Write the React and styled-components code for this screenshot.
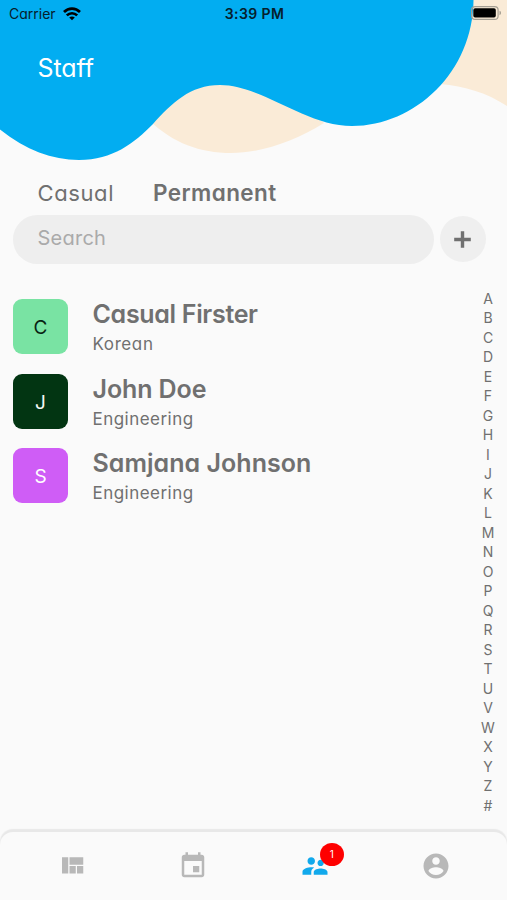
import React, { Component } from 'react';
import styled, { createGlobalStyle } from 'styled-components';

const GlobalStyle = createGlobalStyle`
  * {
    box-sizing: border-box;
  }
  body {
    margin: 0;
    background: #fafafa;
    color: #707070;
    font-family: Inter, "Open Sans", sans-serif;
    font-feature-settings: "cv11";
  }
`;

const Screen = styled.div`
  display: flex;
  flex-direction: column;
  width: 507px;
  height: 900px;
  overflow: hidden;
`;

const Header = styled.header`
  display: grid;
  height: 170px;
  > * {
    grid-area: 1 / 1;
  }
`;

const HeaderContent = styled.div`
  z-index: 1;
`;

const StatusBar = styled.div`
  display: grid;
  grid-template-columns: 1fr auto 1fr;
  align-items: center;
  height: 27px;
  padding: 0 7px 0 9px;
  color: #06202c;
  font-size: 14px;
`;

const Carrier = styled.span`
  display: flex;
  align-items: center;
  gap: 7px;
`;

const Time = styled.span`
  font-weight: 600;
  letter-spacing: 0.4px;
`;

const BatteryIcon = styled.svg`
  justify-self: end;
  margin: -2px -3px 0 0;
`;

const Title = styled.h1`
  margin: 26px 0 0 37.5px;
  color: #fff;
  font-size: 25px;
  font-weight: 400;
  line-height: 30px;
  letter-spacing: -0.1px;
`;

const Tabs = styled.div`
  display: flex;
  gap: 39px;
  height: 45px;
  padding: 9px 0 0 37.5px;
`;

const Tab = styled.span`
  font-size: ${props => props.$active ? 22.5 : 22}px;
  font-weight: ${props => props.$active ? 600 : 400};
  line-height: 28px;
  letter-spacing: ${props => props.$active ? '0.4px' : '0.6px'};
`;

const SearchRow = styled.div`
  display: flex;
  align-items: center;
  gap: 6px;
  padding-left: 13px;
`;

const SearchField = styled.div`
  width: 421px;
  height: 49px;
  padding: 0 24.5px;
  border-radius: 25px;
  background: #eee;
  color: #aaa;
  font-size: 20px;
  line-height: 47px;
  letter-spacing: 0.25px;
`;

const AddButton = styled.button`
  display: flex;
  align-items: center;
  justify-content: center;
  width: 46px;
  height: 46px;
  margin-top: -1px;
  padding: 0 1px 0 0;
  border: 0;
  border-radius: 50%;
  background: #efefef;
`;

const Content = styled.main`
  display: flex;
  flex: 1;
  justify-content: space-between;
`;

const StaffList = styled.div`
  display: flex;
  flex-direction: column;
  gap: 19.5px;
  padding: 35px 0 0 13px;
`;

const StaffRow = styled.div`
  display: flex;
  gap: 24.5px;
  height: 55px;
`;

const Avatar = styled.div`
  width: 55px;
  height: 55px;
  border-radius: 9px;
  background: ${props => props.$bg};
  color: ${props => props.color};
  font-size: 19px;
  line-height: 57px;
  text-align: center;
`;

const StaffName = styled.div`
  font-size: 25px;
  font-weight: 600;
  line-height: 30px;
  letter-spacing: ${props => props.$spacing}px;
  white-space: nowrap;
`;

const StaffRole = styled.div`
  margin-top: 4px;
  font-size: 17px;
  line-height: 23px;
  letter-spacing: ${props => props.$spacing}px;
`;

const AlphabetIndex = styled.div`
  display: flex;
  flex-direction: column;
  width: 38px;
  padding-top: 24.5px;
  font-size: 14px;
  line-height: 19.52px;
  text-align: center;
`;

const TabBar = styled.nav`
  display: flex;
  height: 68px;
  padding: 0 10px 0 11px;
  border-radius: 13px 13px 0 0;
  background: #fafafa;
  box-shadow: 0 -3px 1px #e8e8e8;
`;

const TabItem = styled.a`
  display: flex;
  flex: 1;
  justify-content: center;
  padding-top: 18.7px;
  color: ${props => props.$active ? '#11a9ec' : '#b8b8b8'};
`;

const IconWrap = styled.span`
  position: relative;
  width: 30px;
  height: 30px;
`;

const Badge = styled.span`
  position: absolute;
  top: -7.5px;
  left: 20px;
  width: 24px;
  height: 23px;
  border-radius: 50%;
  background: #fe0000;
  color: #fff;
  font-size: 10px;
  line-height: 23px;
  text-align: center;
`;

const staff = [
  { name: 'Casual Firster', role: 'Korean', bg: '#79e3a3', color: '#082313', spacing: -0.32, roleSpacing: 0.6 },
  { name: 'John Doe', role: 'Engineering', bg: '#023512', color: '#f4f8f5', spacing: -0.1, roleSpacing: 0.47 },
  { name: 'Samjana Johnson', role: 'Engineering', bg: '#cf5df6', color: '#fff', spacing: 0.04, roleSpacing: 0.47 },
];

const tabIcons = [
  { id: 'board', path: 'M10 18h5v-6h-5v6zm-6 0h5V5H4v13zm12 0h5v-6h-5v6zM10 5v6h11V5H10z' },
  { id: 'calendar', path: 'M17 12h-5v5h5v-5zM16 1v2H8V1H6v2H5c-1.11 0-1.99.9-1.99 2L3 19c0 1.1.89 2 2 2h14c1.1 0 2-.9 2-2V5c0-1.1-.9-2-2-2h-1V1h-2zm3 18H5V8h14v11z' },
  { id: 'staff', active: true, badge: 1, path: 'M16.5 12c1.38 0 2.49-1.12 2.49-2.5S17.88 7 16.5 7C15.12 7 14 8.12 14 9.5s1.12 2.5 2.5 2.5zM9 11c1.66 0 2.99-1.34 2.99-3S10.66 5 9 5C7.34 5 6 6.34 6 8s1.34 3 3 3zm7.5 3c-1.83 0-5.5.92-5.5 2.75V19h11v-2.25c0-1.83-3.67-2.75-5.5-2.75zM9 13c-2.33 0-7 1.17-7 3.5V19h7v-2.25c0-.85.33-2.34 2.37-3.47C10.5 13.1 9.66 13 9 13z' },
  { id: 'account', path: 'M12 2C6.48 2 2 6.48 2 12s4.48 10 10 10 10-4.48 10-10S17.52 2 12 2zm0 3c1.66 0 3 1.34 3 3s-1.34 3-3 3-3-1.34-3-3 1.34-3 3-3zm0 14.2c-2.5 0-4.71-1.28-6-3.22.03-1.99 4-3.08 6-3.08 1.99 0 5.97 1.09 6 3.08-1.29 1.94-3.5 3.22-6 3.22z' },
];

const Waves = () => (
  <svg width="507" height="170" viewBox="0 0 507 170">
    <path fill="#faebd7" d="M150 121C173 143 200 153 231 153C262 153 295 141 324 123L280 80H180ZM440 84C465 86 487 93 507 106V0H460Z" />
    <path fill="#02adf1" d="M0 0V129.500C26 150 52 160 79 160C113 160 134 143 153 124C172 103 190 85 220 85C262 85 305 126 352 126C415 126 473 72 473.500 0Z" />
  </svg>
);

const Wifi = () => (
  <svg width="18" height="14" viewBox="0 0 18 14" fill="none" stroke="#000" strokeWidth="2.700">
    <path d="M1 5C5.500 .4 12.500 .4 17 5" />
    <path d="M3.800 8.400C6.800 5.500 11.200 5.500 14.200 8.400" />
    <path d="M6.200 10.500C7.800 9 10.200 9 11.800 10.500L9 13.300Z" fill="#000" stroke="none" />
  </svg>
);

class App extends Component {
  render() {
    return (
      <Screen>
        <GlobalStyle />
        <Header>
          <Waves />
          <HeaderContent>
            <StatusBar>
              <Carrier>Carrier <Wifi /></Carrier>
              <Time>3:39 PM</Time>
              <BatteryIcon width="32" height="14" viewBox="0 0 32 14">
                <rect x=".6" y=".6" width="26.500" height="12.800" rx="3.500" fill="none" stroke="#a59f94" strokeWidth="1.200" />
                <rect x="2.300" y="2.300" width="22.500" height="9.200" rx="1.800" fill="#000" />
                <path d="M28.500 4.800C30.500 5.200 30.500 8.800 28.500 9.200Z" fill="#a59f94" />
              </BatteryIcon>
            </StatusBar>
            <Title>Staff</Title>
          </HeaderContent>
        </Header>
        <Tabs>
          <Tab>Casual</Tab>
          <Tab $active>Permanent</Tab>
        </Tabs>
        <SearchRow>
          <SearchField>Search</SearchField>
          <AddButton aria-label="Add staff">
            <svg width="17" height="17" viewBox="0 0 18 18" fill="none" stroke="#707070" strokeWidth="3.600">
              <path d="M9 .2V17.800M.2 9H17.800" />
            </svg>
          </AddButton>
        </SearchRow>
        <Content>
          <StaffList>
            {staff.map(person => (
              <StaffRow key={person.name}>
                <Avatar $bg={person.bg} color={person.color}>{person.name[0]}</Avatar>
                <div>
                  <StaffName $spacing={person.spacing}>{person.name}</StaffName>
                  <StaffRole $spacing={person.roleSpacing}>{person.role}</StaffRole>
                </div>
              </StaffRow>
            ))}
          </StaffList>
          <AlphabetIndex>
            {'ABCDEFGHIJKLMNOPQRSTUVWXYZ#'.split('').map(letter => <span key={letter}>{letter}</span>)}
          </AlphabetIndex>
        </Content>
        <TabBar>
          {tabIcons.map(tab => (
            <TabItem key={tab.id} $active={tab.active}>
              <IconWrap>
                <svg width="30" height="30" viewBox="0 0 24 24" fill="currentColor"><path d={tab.path} /></svg>
                {tab.badge && <Badge>{tab.badge}</Badge>}
              </IconWrap>
            </TabItem>
          ))}
        </TabBar>
      </Screen>
    );
  }
}

export default App;
